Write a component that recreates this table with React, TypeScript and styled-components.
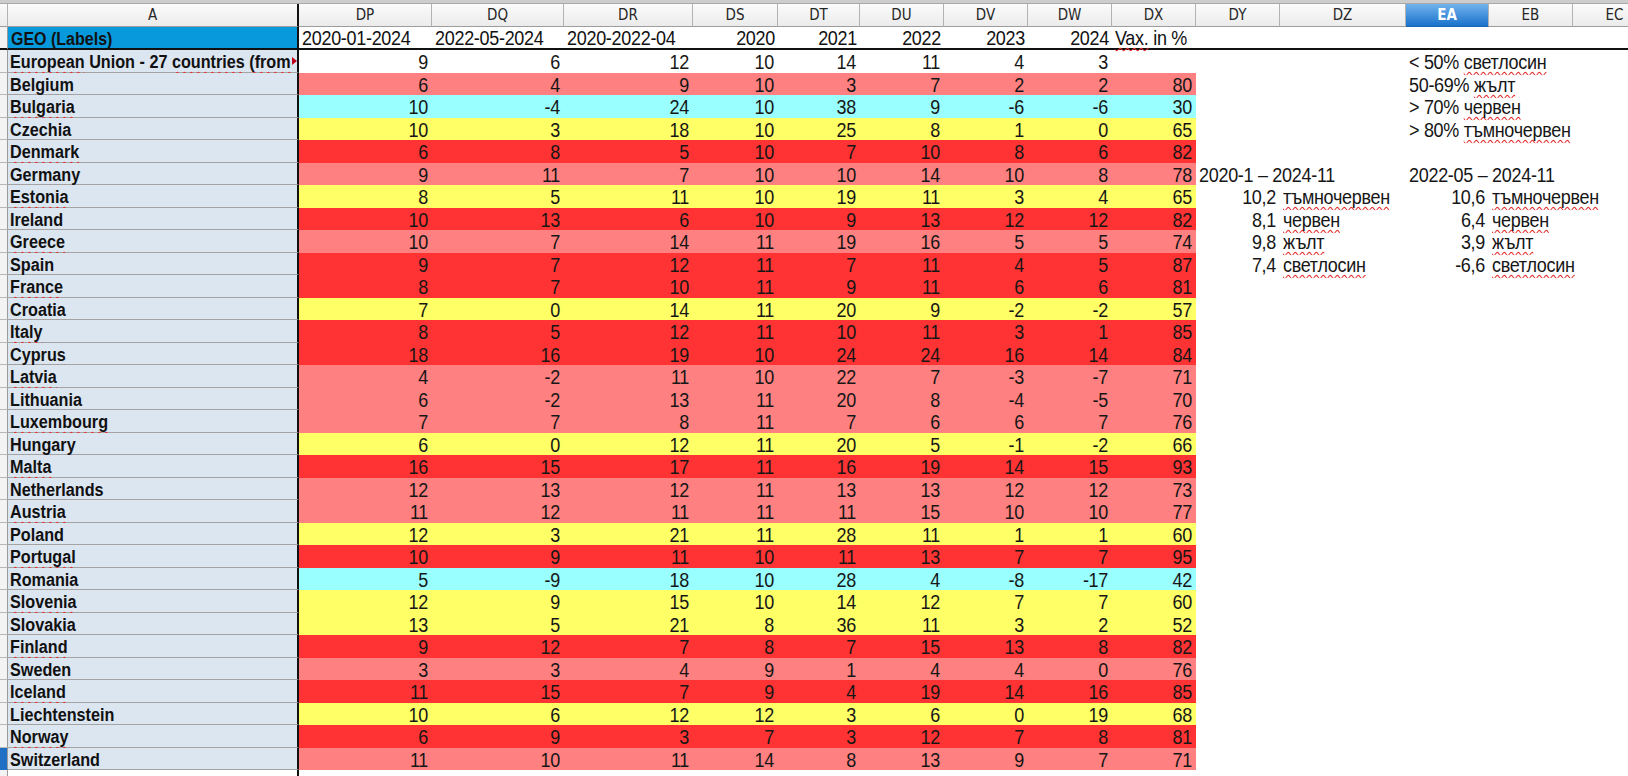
import React from "react";
import styled, { createGlobalStyle, css } from "styled-components";

type Fill = "w" | "lr" | "r" | "y" | "c";

interface Country {
  name: string;
  fill: Fill;
  vals: (number | null)[];
  plain?: boolean;
}

interface Extra {
  text: string;
  right?: boolean;
  spell?: boolean;
}

const FILLS: Record<Fill, string> = {
  w: "transparent",
  lr: "#ff8080",
  r: "#ff3333",
  y: "#ffff66",
  c: "#99ffff",
};

const columnLabels = ["A", "DP", "DQ", "DR", "DS", "DT", "DU", "DV", "DW", "DX", "DY", "DZ", "EA", "EB", "EC"];

const titles: { text: string; right?: boolean; spell?: string }[] = [
  { text: "2020-01-2024" },
  { text: "2022-05-2024" },
  { text: "2020-2022-04" },
  { text: "2020", right: true },
  { text: "2021", right: true },
  { text: "2022", right: true },
  { text: "2023", right: true },
  { text: "2024", right: true },
  { text: " in %", spell: "Vax." },
];

const countries: Country[] = [
  { name: "European Union - 27 countries (from", fill: "w", vals: [9, 6, 12, 10, 14, 11, 4, 3, null] },
  { name: "Belgium", fill: "lr", vals: [6, 4, 9, 10, 3, 7, 2, 2, 80] },
  { name: "Bulgaria", fill: "c", vals: [10, -4, 24, 10, 38, 9, -6, -6, 30] },
  { name: "Czechia", fill: "y", vals: [10, 3, 18, 10, 25, 8, 1, 0, 65] },
  { name: "Denmark", fill: "r", vals: [6, 8, 5, 10, 7, 10, 8, 6, 82] },
  { name: "Germany", fill: "lr", vals: [9, 11, 7, 10, 10, 14, 10, 8, 78] },
  { name: "Estonia", fill: "y", vals: [8, 5, 11, 10, 19, 11, 3, 4, 65] },
  { name: "Ireland", fill: "r", vals: [10, 13, 6, 10, 9, 13, 12, 12, 82] },
  { name: "Greece", fill: "lr", vals: [10, 7, 14, 11, 19, 16, 5, 5, 74] },
  { name: "Spain", fill: "r", vals: [9, 7, 12, 11, 7, 11, 4, 5, 87] },
  { name: "France", fill: "r", vals: [8, 7, 10, 11, 9, 11, 6, 6, 81] },
  { name: "Croatia", fill: "y", vals: [7, 0, 14, 11, 20, 9, -2, -2, 57] },
  { name: "Italy", fill: "r", vals: [8, 5, 12, 11, 10, 11, 3, 1, 85] },
  { name: "Cyprus", fill: "r", vals: [18, 16, 19, 10, 24, 24, 16, 14, 84] },
  { name: "Latvia", fill: "lr", vals: [4, -2, 11, 10, 22, 7, -3, -7, 71] },
  { name: "Lithuania", fill: "lr", vals: [6, -2, 13, 11, 20, 8, -4, -5, 70] },
  { name: "Luxembourg", fill: "lr", vals: [7, 7, 8, 11, 7, 6, 6, 7, 76] },
  { name: "Hungary", fill: "y", vals: [6, 0, 12, 11, 20, 5, -1, -2, 66] },
  { name: "Malta", fill: "r", vals: [16, 15, 17, 11, 16, 19, 14, 15, 93] },
  { name: "Netherlands", fill: "lr", vals: [12, 13, 12, 11, 13, 13, 12, 12, 73] },
  { name: "Austria", fill: "lr", vals: [11, 12, 11, 11, 11, 15, 10, 10, 77] },
  { name: "Poland", fill: "y", vals: [12, 3, 21, 11, 28, 11, 1, 1, 60] },
  { name: "Portugal", fill: "r", vals: [10, 9, 11, 10, 11, 13, 7, 7, 95] },
  { name: "Romania", fill: "c", vals: [5, -9, 18, 10, 28, 4, -8, -17, 42] },
  { name: "Slovenia", fill: "y", vals: [12, 9, 15, 10, 14, 12, 7, 7, 60] },
  { name: "Slovakia", fill: "y", vals: [13, 5, 21, 8, 36, 11, 3, 2, 52] },
  { name: "Finland", fill: "r", vals: [9, 12, 7, 8, 7, 15, 13, 8, 82] },
  { name: "Sweden", fill: "lr", vals: [3, 3, 4, 9, 1, 4, 4, 0, 76] },
  { name: "Iceland", fill: "r", vals: [11, 15, 7, 9, 4, 19, 14, 16, 85] },
  { name: "Liechtenstein", fill: "y", vals: [10, 6, 12, 12, 3, 6, 0, 19, 68], plain: true },
  { name: "Norway", fill: "r", vals: [6, 9, 3, 7, 3, 12, 7, 8, 81] },
  { name: "Switzerland", fill: "lr", vals: [11, 10, 11, 14, 8, 13, 9, 7, 71] },
];

// cells in DY, DZ, EA, EB for the legend rows
const extras: Record<number, (Extra | null)[]> = {
  0: [null, null, { text: "< 50% " }, null],
  1: [null, null, { text: "50-69% " }, null],
  2: [null, null, { text: "> 70% " }, null],
  3: [null, null, { text: "> 80% " }, null],
  5: [{ text: "2020-1 – 2024-11" }, null, { text: "2022-05 – 2024-11" }, null],
  6: [{ text: "10,2", right: true }, { text: "тъмночервен", spell: true }, { text: "10,6", right: true }, { text: "тъмночервен", spell: true }],
  7: [{ text: "8,1", right: true }, { text: "червен", spell: true }, { text: "6,4", right: true }, { text: "червен", spell: true }],
  8: [{ text: "9,8", right: true }, { text: "жълт", spell: true }, { text: "3,9", right: true }, { text: "жълт", spell: true }],
  9: [{ text: "7,4", right: true }, { text: "светлосин", spell: true }, { text: "-6,6", right: true }, { text: "светлосин", spell: true }],
};

const legendWords: Record<number, string> = {
  0: "светлосин",
  1: "жълт",
  2: "червен",
  3: "тъмночервен",
};

const GlobalStyle = createGlobalStyle`
  html, body {
    margin: 0;
    padding: 0;
    background: #ffffff;
    overflow: hidden;
  }
  body {
    font-family: "Liberation Sans", Arial, sans-serif;
    color: #111;
  }
`;

const Window = styled.div`
  width: 1628px;
  height: 776px;
  overflow: hidden;
  background: #ffffff;
`;

const TopStrip = styled.div`
  height: 3px;
  background: #cdcdcd;
  border-bottom: 1px solid #a9a9a9;
`;

const Sheet = styled.div`
  display: grid;
  grid-template-columns: 8px 291px 133px 132px 129px 85px 82px 84px 84px 84px 84px 84px 126px 83px 84px 84px;
  grid-template-rows: 23px 23px repeat(33, 22.5px);
`;

/* the screenshot is a little stretched vertically, glyphs included */
const Txt = styled.span`
  display: inline-block;
  transform: scaleY(1.12);
  transform-origin: 50% 55%;
`;

const cellText = css`
  box-sizing: border-box;
  white-space: nowrap;
  font-size: 18px;
  letter-spacing: -0.3px;
  line-height: 24.5px;
`;

const ColHead = styled.div<{ $selected?: boolean; $thick?: boolean }>`
  box-sizing: border-box;
  background: linear-gradient(#fbfbfb, #ebebeb);
  border-right: 1px solid #b3b3b3;
  border-bottom: 1px solid #9d9d9d;
  font-family: "DejaVu Sans", "Liberation Sans", sans-serif;
  font-size: 13.5px;
  line-height: 22px;
  color: #262626;
  text-align: center;
  ${(p) =>
    p.$thick &&
    css`
      border-right: 2px solid #111;
    `}
  ${(p) =>
    p.$selected &&
    css`
      background: linear-gradient(#71b2ec, #1a72cb);
      border-bottom-color: #1a64b4;
      color: #ffffff;
      font-weight: bold;
    `}
`;

const RowHead = styled.div<{ $current?: boolean; $thick?: boolean }>`
  box-sizing: border-box;
  background: #f3f3f3;
  border-right: 1px solid #9a9a9a;
  border-bottom: 1px solid #b8b8b8;
  ${(p) =>
    p.$current &&
    css`
      background: #1f70c4;
      border-bottom-color: #1f70c4;
    `}
  ${(p) =>
    p.$thick &&
    css`
      border-bottom: 2px solid #111;
    `}
`;

const GeoCell = styled.div`
  box-sizing: border-box;
  white-space: nowrap;
  background: #0899dc;
  border-right: 2px solid #111;
  border-bottom: 2px solid #111;
  padding-left: 3px;
  font-size: 16px;
  font-weight: bold;
  line-height: 23px;
`;

const TitleCell = styled.div<{ $right?: boolean }>`
  ${cellText};
  line-height: 23px;
  border-bottom: 2px solid #111;
  padding: 0 3px;
  text-align: ${(p) => (p.$right ? "right" : "left")};
  overflow: visible;
`;

const LabelCell = styled.div<{ $blank?: boolean }>`
  box-sizing: border-box;
  position: relative;
  background: ${(p) => (p.$blank ? "#ffffff" : "#dce6f1")};
  border-right: 2px solid #111;
  border-bottom: 1px solid ${(p) => (p.$blank ? "#ffffff" : "#a4a4a4")};
  padding: 0 5px 0 2px;
`;

const LabelText = styled.div`
  overflow: hidden;
  white-space: nowrap;
  font-size: 16.2px;
  font-weight: bold;
  line-height: 25.5px;
  color: #111;
`;

const OverflowMark = styled.span`
  position: absolute;
  right: 0;
  top: 7px;
  width: 0;
  height: 0;
  border-top: 4px solid transparent;
  border-bottom: 4px solid transparent;
  border-left: 5px solid #c0001a;
`;

const Cell = styled.div<{ $fill: Fill; $right?: boolean }>`
  ${cellText};
  background: ${(p) => FILLS[p.$fill]};
  padding: 0 4px 0 3px;
  text-align: ${(p) => (p.$right === false ? "left" : "right")};
  color: #161616;
`;

const Spell = styled.span`
  text-decoration: underline wavy #e2312f;
  text-decoration-thickness: 1px;
  text-underline-offset: 2px;
  text-decoration-skip-ink: none;
`;

const Label: React.FC<{ country: Country; index: number }> = ({ country, index }) => {
  if (index === 0) {
    return (
      <LabelCell>
        <LabelText>
          <Txt>
            <Spell>European</Spell> Union - 27 <Spell>countries</Spell> <Spell>(from</Spell>
          </Txt>
        </LabelText>
        <OverflowMark />
      </LabelCell>
    );
  }
  return (
    <LabelCell>
      <LabelText>
        <Txt>{country.plain ? country.name : <Spell>{country.name}</Spell>}</Txt>
      </LabelText>
    </LabelCell>
  );
};

const ExtraCells: React.FC<{ index: number }> = ({ index }) => {
  const row = extras[index] || [null, null, null, null];
  return (
    <>
      {row.map((ex, k) => (
        <Cell key={k} $fill="w" $right={ex?.right ? true : false}>
          {(ex || (k === 2 && legendWords[index])) && (
            <Txt>
              {ex && (ex.spell ? <Spell>{ex.text}</Spell> : ex.text)}
              {k === 2 && legendWords[index] && <Spell>{legendWords[index]}</Spell>}
            </Txt>
          )}
        </Cell>
      ))}
      <Cell $fill="w" />
    </>
  );
};

export default function App() {
  return (
    <Window>
      <GlobalStyle />
      <TopStrip />
      <Sheet>
        <ColHead />
        {columnLabels.map((c) => (
          <ColHead key={c} $thick={c === "A"} $selected={c === "EA"}>
            <Txt>{c}</Txt>
          </ColHead>
        ))}

        <RowHead $thick />
        <GeoCell>
          <Txt>GEO (Labels)</Txt>
        </GeoCell>
        {titles.map((t, i) => (
          <TitleCell key={i} $right={t.right}>
            <Txt>
              {t.spell && <Spell>{t.spell}</Spell>}
              {t.text}
            </Txt>
          </TitleCell>
        ))}
        {[0, 1, 2, 3, 4].map((k) => (
          <TitleCell key={`e${k}`} />
        ))}

        {countries.map((c, i) => (
          <React.Fragment key={c.name}>
            <RowHead $current={i === countries.length - 1} />
            <Label country={c} index={i} />
            {c.vals.map((v, j) => (
              <Cell key={j} $fill={v === null ? "w" : c.fill}>
                {v !== null && <Txt>{v}</Txt>}
              </Cell>
            ))}
            <ExtraCells index={i} />
          </React.Fragment>
        ))}

        <RowHead />
        <LabelCell $blank />
      </Sheet>
    </Window>
  );
}
